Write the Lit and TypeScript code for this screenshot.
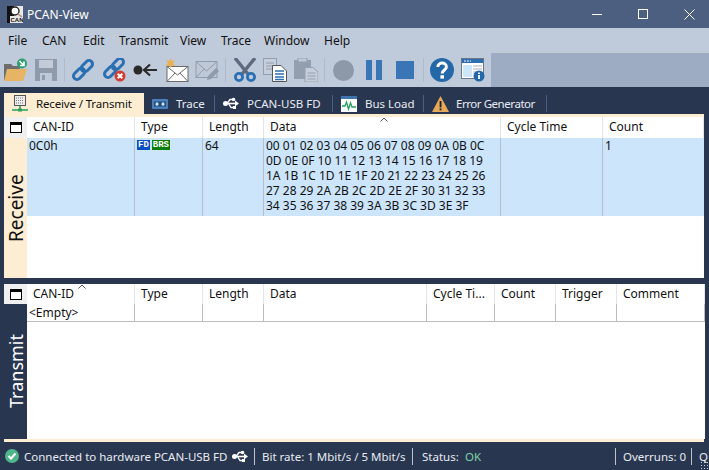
import { LitElement, css, html, svg } from "lit";
import { customElement } from "lit/decorators.js";

const icon = (w: number, h: number, body: unknown) =>
  html`<svg width=${w} height=${h} viewBox="0 0 ${w} ${h}">${body}</svg>`;

const link = svg`<g fill="none" stroke="#2b6fb3" stroke-width="3" transform="rotate(-45 12 12)">
  <rect x="0" y="8.5" width="13" height="7" rx="3.5" /><rect x="11" y="8.5" width="13" height="7" rx="3.5" /></g>`;

const usbGlyph = svg`<circle cx="2.5" cy="6.5" r="2.5" fill="#fff" /><path d="M2 6.5 H13" stroke="#fff" stroke-width="1.6" />
  <path d="M12 3.5 L16 6.5 L12 9.5 Z" fill="#fff" /><path d="M4 6.5 L7 2.5 H10 M5.5 6.5 L8 10.5 H11" stroke="#fff" stroke-width="1.3" fill="none" />
  <circle cx="10.5" cy="2.5" r="1.8" fill="#fff" /><rect x="10" y="9" width="3" height="3" fill="#fff" />`;

const toolIcons = {
  folder: icon(24, 24, svg`<path d="M1 22 V6 H8 L10 8 H17 V22 Z" fill="#6d6d6d" />
    <path d="M1 23 L4 11 H24 L20 23 Z" fill="#e7b365" />
    <circle cx="19" cy="5.5" r="5" fill="#2f9e6e" /><path d="M16.5 3 L21 7.5 M21 3.5 V7.5 H17" stroke="#fff" stroke-width="1.6" fill="none" />`),
  save: icon(22, 22, svg`<path d="M0 0 H22 V22 H0 Z" fill="#8f9aaa" /><rect x="4" y="1" width="14" height="8" fill="#c3cbd8" />
    <rect x="5" y="14" width="12" height="8" fill="#bfc8d6" /><rect x="7" y="16" width="3" height="5" fill="#8f9aaa" />`),
  link: icon(24, 24, link),
  linkX: icon(24, 24, svg`<g transform="translate(0 -2)">${link}</g><circle cx="18" cy="18" r="5.5" fill="#d23c32" />
    <path d="M15.7 15.7 L20.3 20.3 M20.3 15.7 L15.7 20.3" stroke="#fff" stroke-width="2" />`),
  arrow: icon(24, 24, svg`<circle cx="5" cy="12" r="4.5" fill="#2a2a2a" /><path d="M11 12 H24 M17 6.5 L11 12 L17 17.5" stroke="#2a2a2a" stroke-width="2.2" fill="none" />`),
  newMail: icon(24, 24, svg`<rect x="2" y="8.5" width="21" height="15" fill="#fff" stroke="#6b6b6b" /><path d="M2 8.5 L12.5 17 L23 8.5 M2 23.5 L10 15 M23 23.5 L15 15" stroke="#6b6b6b" fill="none" />
    <path d="M5.5 0 L6.6 3 L10 2 L8 5 L10.5 8 L7 7.4 L5.5 10 L4 7.4 L0.5 8 L3 5 L1 2 L4.4 3 Z" fill="#e9b04f" />`),
  editMail: icon(24, 24, svg`<rect x="1" y="3.5" width="21" height="16" fill="#bfc8d6" stroke="#8f9aaa" /><path d="M1 3.5 L11.5 13 L22 3.5 M1 19.5 L9 11" stroke="#8f9aaa" fill="none" />
    <path d="M12 22 L13 18 L21 10 L24 13 L16 21 Z" fill="#8f9aaa" />`),
  scissors: icon(22, 24, svg`<path d="M1 0 L14 16 M21 0 L8 16" stroke="#5e6b7e" stroke-width="3.4" />
    <circle cx="5" cy="19" r="3.6" fill="none" stroke="#2b6fb3" stroke-width="2.8" /><circle cx="17" cy="19" r="3.6" fill="none" stroke="#2b6fb3" stroke-width="2.8" />`),
  copy: icon(24, 24, svg`<rect x="0.5" y="0.5" width="13" height="16" fill="#c6cedb" stroke="#939eae" /><path d="M3 5 H11 M3 8 H11 M3 11 H11" stroke="#939eae" />
    <path d="M9.5 7.5 H18 L23.5 13 V23.5 H9.5 Z" fill="#fff" stroke="#555" /><path d="M12 13 H21 M12 16 H21 M12 19 H21 M12 21.5 H21" stroke="#2b6fb3" stroke-width="1.4" />`),
  paste: icon(24, 24, svg`<rect x="0" y="2" width="17" height="19" fill="#939eae" /><rect x="4" y="0" width="9" height="4" fill="#bfc9d8" stroke="#939eae" />
    <path d="M11 9.5 H19 L24 14 V24 H11 Z" fill="#c6cedb" stroke="#939eae" /><path d="M13.5 15 H21.5 M13.5 18 H21.5 M13.5 21 H21.5" stroke="#939eae" />`),
  record: icon(21, 21, svg`<circle cx="10.5" cy="10.5" r="10.5" fill="#8d98a8" />`),
  pause: icon(16, 20, svg`<rect x="0" y="0" width="6" height="20" fill="#3a76b5" /><rect x="10" y="0" width="6" height="20" fill="#3a76b5" />`),
  stop: icon(18, 18, svg`<rect width="18" height="18" fill="#3a76b5" />`),
  help: icon(24, 24, svg`<circle cx="12" cy="12" r="12" fill="#2468a8" /><path d="M7.8 9 C8 3.8 16.4 3.8 16.4 9 C16.4 12 12.2 12 12.2 15.4" stroke="#fff" stroke-width="3" fill="none" /><rect x="10.4" y="17.2" width="3.6" height="3.4" fill="#fff" />`),
  info: icon(24, 24, svg`<rect x="0.5" y="0.5" width="22" height="20" fill="#fff" stroke="#6b7685" /><rect x="1" y="1" width="21" height="4" fill="#2d6fb0" />
    <path d="M3 3 H10" stroke="#fff" stroke-dasharray="2 1" /><rect x="2" y="7" width="9" height="12" fill="#cde6fa" /><path d="M12 8 H21 M12 11 H21 M12 14 H18" stroke="#aab" />
    <circle cx="18" cy="18" r="5.5" fill="#2468a8" /><path d="M18 17 V21 M18 14.5 V16" stroke="#fff" stroke-width="1.8" />`),
};

const tabIcons = {
  monitor: icon(16, 18, svg`<rect x="2.5" y="0.5" width="11" height="10" fill="#eee" stroke="#555" /><path d="M4 3 H12 M4 5.5 H7 M8 5.5 H12 M4 8 H12" stroke="#777" stroke-dasharray="1 1" />
    <path d="M8 11 V15 M0 15 H16" stroke="#2e9e5b" stroke-width="1.6" /><rect x="6" y="13.5" width="4" height="3" fill="#2e9e5b" />`),
  trace: icon(16, 10, svg`<rect width="16" height="10" rx="1" fill="#4a80bb" /><rect x="2" y="2.5" width="12" height="5" fill="#1f4a7a" /><rect x="3.5" y="3.2" width="3" height="3.6" rx="1.5" fill="#cfe4f8" /><rect x="9.5" y="3.2" width="3" height="3.6" rx="1.5" fill="#cfe4f8" />`),
  usb: icon(16, 13, usbGlyph),
  busLoad: icon(16, 16, svg`<rect width="16" height="16" fill="#fff" /><rect width="16" height="3" fill="#3f74ad" /><path d="M1 10 H4 L5.5 6 L7.5 13 L9.5 7 L11 11 H15" stroke="#21a05b" stroke-width="1.3" fill="none" />`),
  warning: icon(17, 16, svg`<path d="M8.5 0 L17 16 H0 Z" fill="#e6a95a" /><rect x="7.6" y="5" width="1.9" height="6.4" fill="#222" /><rect x="7.6" y="12.4" width="1.9" height="1.9" fill="#222" />`),
};

const corner = html`<svg width="12" height="11" viewBox="0 0 12 11"><rect x="0.5" y="0.5" width="11" height="10" fill="#fff" stroke="#000" /><rect width="12" height="3" fill="#000" /></svg>`;
const caret = html`<svg class="caret" width="8" height="5" viewBox="0 0 8 5"><path d="M0.5 4.5 L4 1 L7.5 4.5" fill="none" stroke="#555" /></svg>`;

@customElement("app-root")
export class AppRoot extends LitElement {
  static styles = css`
    :host {
      display: flex;
      flex-direction: column;
      width: 709px;
      height: 470px;
      overflow: hidden;
      background: #283650;
      font: 11.5px "Noto Sans", sans-serif;
      color: #111;
    }
    .title {
      height: 28px;
      flex: none;
      display: flex;
      align-items: center;
      background: #4c5f81;
      color: #fff;
      padding-left: 7px;
      font-size: 12px;
    }
    .title .name { flex: 1; margin-left: 4px; }
    .title .win:last-child { margin-right: -3px; }
    .win { width: 46px; height: 28px; display: flex; align-items: center; justify-content: center; flex: none; }
    .menu {
      height: 25px;
      flex: none;
      display: grid;
      grid-template-columns: 34px 41px 36px 61px 41px 43px 60px 40px;
      align-items: center;
      background: #bfcadb;
      padding-left: 8px;
      font-size: 12px;
    }
    .toolbar {
      height: 34px;
      flex: none;
      display: flex;
      background: #bfcadb;
    }
    .tools {
      width: 491px;
      flex: none;
      display: grid;
      grid-template-columns: 32px 29px 7px 31px 31px 32px 30px 30px 9px 29px 31px 30px 9px 33px 30px 27px 7px 31px 30px;
      align-items: center;
      padding-left: 3px;
      box-sizing: border-box;
    }
    .tools svg { display: block; }
    .tools .sep { width: 1px; height: 24px; background: #aeb9ca; }
    .toolrest { flex: 1; background: #9dacc3; }
    .tabs {
      height: 21px;
      flex: none;
      margin: 6px 0 0 4px;
      display: grid;
      grid-template-columns: 140px 71px 118px 91px 123px;
      color: #e8ecf2;
    }
    .tab {
      display: flex;
      align-items: center;
      gap: 8px;
      padding-left: 8px;
      white-space: nowrap;
      border-right: 1px solid #4c5f81;
      margin: 2px 0;
    }
    .tab.active {
      background: #fdeed3;
      color: #111;
      border-right: 0;
      margin: 0;
      letter-spacing: -0.15px;
    }
    .tab.tight { letter-spacing: -0.45px; gap: 7px; }
    .panels {
      margin: 0 5px 0 4px;
      height: 328px;
      flex: none;
      display: flex;
      flex-direction: column;
      background: #283650;
      border-top: 3px solid #fdeed3;
      border-bottom: 3px solid #fdeed3;
      box-sizing: border-box;
    }
    .panel { display: flex; }
    .panel.rx { height: 161px; flex: none; }
    .panel.tx { flex: 1; margin-top: 6px; }
    .side {
      width: 23px;
      flex: none;
      display: flex;
      flex-direction: column;
    }
    .rx .side { background: #fdeed3; color: #111; }
    .tx .side { background: #283650; color: #fff; }
    .corner {
      height: 20px;
      flex: none;
      display: flex;
      align-items: center;
      justify-content: center;
      background: #f0f0f0;
    }
    .rx .corner { height: 21px; }
    .side-label {
      flex: 1;
      display: flex;
      align-items: center;
      justify-content: center;
      writing-mode: vertical-rl;
      transform: rotate(180deg);
      font-size: 18px;
    }
    .rx .side-label { font-size: 19px; }
    .table {
      flex: 1;
      background: #fff;
      display: grid;
      grid-auto-rows: min-content;
    }
    .rx .table { grid-template-columns: 108px 68px 61px 237px 102px 101px; }
    .tx .table { grid-template-columns: 108px 68px 61px 163px 68px 61px 61px 88px; }
    .th {
      height: 21px;
      line-height: 20px;
      padding-left: 6px;
      position: relative;
      border-right: 1px solid #e5e5e5;
      box-sizing: border-box;
      white-space: nowrap;
      font-size: 12px;
    }
    .tx .th { height: 20px; }
    .caret { position: absolute; }
    .rx .caret { left: 116px; top: 0; }
    .tx .caret { left: 51px; top: 0; }
    .td {
      height: 78px;
      line-height: 15px;
      padding-left: 2px;
      background: #cce5fb;
      border-right: 1px solid #b4c0cc;
      box-sizing: border-box;
      font-size: 12px;
    }
    .td.data { padding-left: 2px; white-space: nowrap; }
    .rx .td.last { border-right: 0; }
    .td.empty {
      background: #fff;
      height: 18px;
      line-height: 17px;
      border-right-color: #bdbdbd;
      border-bottom: 1px solid #bdbdbd;
    }
    .tags { display: flex; gap: 2px; }
    .tag {
      height: 10px;
      line-height: 10px;
      padding: 0 1px;
      margin-top: 2px;
      font: bold 9px/10px "Liberation Mono", monospace;
      color: #fff;
    }
    .fd { background: #0b50c0; }
    .brs { background: #0a7d0a; }
    .status {
      flex: 1;
      display: grid;
      grid-template-columns: 19px 208px 22px 8px 150px 10px 43px 150px 8px 68px 8px 10px;
      align-items: center;
      color: #e8ecf2;
      padding-left: 5px;
      white-space: nowrap;
      position: relative;
    }
    .status .rule { width: 1px; height: 17px; background: #b9c2d0; }
    .status .ok { color: #7fd0a5; }
    .status svg { display: block; }
    .grip {
      position: absolute;
      right: 0;
      bottom: 0;
      width: 9px;
      height: 9px;
      background-image: radial-gradient(#c8cfdb 1px, transparent 1px);
      background-size: 3px 3px;
    }
  `;

  render() {
    const bytes = Array.from({ length: 64 }, (_, i) =>
      i.toString(16).toUpperCase().padStart(2, "0")
    );
    const lines = [];
    for (let i = 0; i < bytes.length; i += 13) {
      lines.push(bytes.slice(i, i + 13).join(" "));
    }
    const t = toolIcons;
    const sep = html`<span class="sep"></span>`;
    return html`
      <div class="title">
        ${icon(16, 17, svg`<rect x="0" y="0" width="16" height="17" fill="#e8e8e8" /><rect x="0" y="0" width="7" height="10" fill="#111" /><circle cx="8" cy="5" r="4" fill="#fff" stroke="#222" stroke-width="1.4" /><path d="M11 8 L15 11" stroke="#b98" stroke-width="1.6" /><rect x="0" y="10" width="3" height="7" fill="#111" /><text x="3.5" y="16" font-size="6" font-weight="bold" font-family="Liberation Sans" fill="#111">CAN</text>`)}
        <span class="name">PCAN-View</span>
        <span class="win"><svg width="11" height="11"><path d="M0 5.5 H10" stroke="#fff" /></svg></span>
        <span class="win"><svg width="11" height="11"><rect x="0.5" y="0.5" width="9" height="9" fill="none" stroke="#fff" /></svg></span>
        <span class="win"><svg width="11" height="11"><path d="M0.5 0.5 L10.5 10.5 M10.5 0.5 L0.5 10.5" stroke="#fff" /></svg></span>
      </div>
      <div class="menu">
        ${["File", "CAN", "Edit", "Transmit", "View", "Trace", "Window", "Help"].map((m) => html`<span>${m}</span>`)}
      </div>
      <div class="toolbar">
        <div class="tools">
          ${t.folder}${t.save}${sep}${t.link}${t.linkX}${t.arrow}${t.newMail}${t.editMail}${sep}
          ${t.scissors}${t.copy}${t.paste}${sep}${t.record}${t.pause}${t.stop}${sep}${t.help}${t.info}
        </div>
        <div class="toolrest"></div>
      </div>
      <div class="tabs">
        <div class="tab active">${tabIcons.monitor}<span>Receive / Transmit</span></div>
        <div class="tab">${tabIcons.trace}<span>Trace</span></div>
        <div class="tab">${tabIcons.usb}<span>PCAN-USB FD</span></div>
        <div class="tab">${tabIcons.busLoad}<span>Bus Load</span></div>
        <div class="tab tight">${tabIcons.warning}<span>Error Generator</span></div>
      </div>
      <div class="panels">
        <section class="panel rx">
          <div class="side">
            <div class="corner">${corner}</div>
            <div class="side-label">Receive</div>
          </div>
          <div class="table">
            <div class="th">CAN-ID</div>
            <div class="th">Type</div>
            <div class="th">Length</div>
            <div class="th">Data${caret}</div>
            <div class="th">Cycle Time</div>
            <div class="th">Count</div>
            <div class="td">0C0h</div>
            <div class="td"><div class="tags"><span class="tag fd">FD</span><span class="tag brs">BRS</span></div></div>
            <div class="td">64</div>
            <div class="td data">${lines.map((l) => html`<div>${l}</div>`)}</div>
            <div class="td"></div>
            <div class="td last">1</div>
          </div>
        </section>
        <section class="panel tx">
          <div class="side">
            <div class="corner">${corner}</div>
            <div class="side-label">Transmit</div>
          </div>
          <div class="table">
            <div class="th">CAN-ID${caret}</div>
            <div class="th">Type</div>
            <div class="th">Length</div>
            <div class="th">Data</div>
            <div class="th">Cycle Ti...</div>
            <div class="th">Count</div>
            <div class="th">Trigger</div>
            <div class="th">Comment</div>
            <div class="td empty">&lt;Empty&gt;</div>
            <div class="td empty"></div>
            <div class="td empty"></div>
            <div class="td empty"></div>
            <div class="td empty"></div>
            <div class="td empty"></div>
            <div class="td empty"></div>
            <div class="td empty last"></div>
          </div>
        </section>
      </div>
      <div class="status">
        ${icon(14, 14, svg`<circle cx="7" cy="7" r="7" fill="#4fb58a" /><path d="M3.5 7 L6 9.5 L10.5 4.5" stroke="#fff" stroke-width="2" fill="none" />`)}
        <span>Connected to hardware PCAN-USB FD</span>
        ${tabIcons.usb}
        <span class="rule"></span>
        <span>Bit rate: 1 Mbit/s / 5 Mbit/s</span>
        <span class="rule"></span>
        <span>Status:</span>
        <span class="ok">OK</span>
        <span class="rule"></span>
        <span>Overruns: 0</span>
        <span class="rule"></span>
        <span>Q</span>
        <span class="grip"></span>
      </div>
    `;
  }
}
